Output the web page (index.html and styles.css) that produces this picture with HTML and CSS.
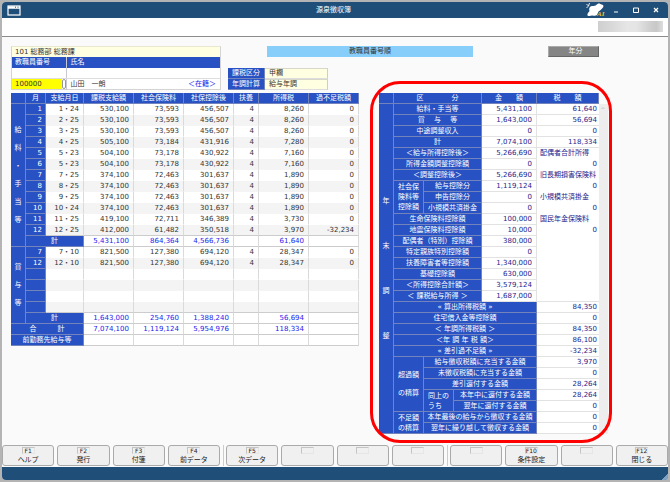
FILE: index.html
```html
<!DOCTYPE html>
<html lang="ja">
<head>
    <meta charset="UTF-8">
    <meta name="viewport" content="width=device-width, initial-scale=1.0">
    <title>源泉徴収簿</title>
    <link rel="stylesheet" href="styles.css">
</head>
<body>
    <div class="window">
        <header class="titlebar">
            <svg class="window-icon" viewBox="0 0 14 11" aria-hidden="true">
                <rect x="1" y="1" width="12" height="9" fill="none" stroke="#fff" stroke-width="1.2"/>
                <path d="M1 2.500h12" stroke="#fff" stroke-width="2.500"/>
                <path d="M8 2.200h1M10.500 2.200h1" stroke="#1f4e79" stroke-width="1"/>
            </svg>
            <h1>源泉徴収簿</h1>
            <div class="window-controls">
                <svg class="logo" viewBox="0 0 20 14" role="img" aria-label="AI">
                    <path d="M0.500 1l2 2-2 2M3.500 0l-1 3" fill="none" stroke="#fff" stroke-width=".9"/>
                    <path d="M1.500 12.500c-.5-2 1-3 2-4.500C2.500 5 4 2.500 7 3c2 .2 3-.8 4.500-2 1.500-1.200 3 0 4 .5 2 .2 2.500 2 1.200 3.200C15.500 6 15 7 12.500 8.500L11 12c-2 1.500-3.500.3-5 .5s-2.500 1-4.500 0z" fill="#fff"/>
                    <text x="11" y="13" class="logo-text">AI</text>
                </svg>
                <button type="button" aria-label="最小化">
                    <svg viewBox="0 0 8 8"><path d="M2 6h4" stroke="#fff" stroke-width="1.200"/></svg>
                </button>
                <button type="button" aria-label="最大化">
                    <svg viewBox="0 0 8 8"><path d="M1.500 2h5v4.500h-5z" fill="none" stroke="#fff"/></svg>
                </button>
                <button type="button" aria-label="閉じる">
                    <svg viewBox="0 0 8 8"><path d="M2 2l4 4M6 2l-4 4" stroke="#fff" stroke-width="1.300"/></svg>
                </button>
            </div>
        </header>

        <div class="toolbar"><span class="masked"></span></div>

        <main>
            <div class="summary">
                <div class="employee">
                    <div class="department">101 総務部 総務課</div>
                    <div class="employee-row employee-head">
                        <label for="employee-no">教職員番号</label>
                        <span>氏名</span>
                    </div>
                    <div class="employee-row employee-blank"><span></span><span></span></div>
                    <div class="employee-row">
                        <div class="number-field">
                            <input type="text" id="employee-no" value="100000">
                            <button type="button" aria-label="検索"></button>
                        </div>
                        <div class="name"><span>山田　一朗</span><span class="status">＜在籍＞</span></div>
                    </div>
                </div>
                <div class="sort-order">教職員番号順</div>
                <button type="button" class="year">年分</button>
                <table class="tax-type">
                    <tr><th scope="row">課税区分</th><td>甲欄</td></tr>
                    <tr><th scope="row">年調計算</th><td>給与年調</td></tr>
                </table>
            </div>

            <div class="ledgers">
                <table class="payroll">
                    <colgroup>
                        <col class="c-group"><col class="c-month"><col class="c-date">
                        <col class="c-amount"><col class="c-amount"><col class="c-amount">
                        <col class="c-family"><col class="c-amount"><col class="c-amount">
                    </colgroup>
                    <thead>
                        <tr><th></th><th>月</th><th>支給月日</th><th>課税支給額</th><th>社会保険料</th><th>社保控除後</th><th>扶養</th><th>所得税</th><th>過不足税額</th></tr>
                    </thead>
                    <tbody>
                        <tr><th rowspan="13" class="vertical">給<br>料<br>・<br>手<br>当<br>等</th><th class="month">1</th><td>1・24</td><td>530,100</td><td>73,593</td><td>456,507</td><td>4</td><td>8,260</td><td>0</td></tr>
                        <tr><th class="month">2</th><td>2・25</td><td>530,100</td><td>73,593</td><td>456,507</td><td>4</td><td>8,260</td><td>0</td></tr>
                        <tr><th class="month">3</th><td>3・25</td><td>530,100</td><td>73,593</td><td>456,507</td><td>4</td><td>8,260</td><td>0</td></tr>
                        <tr><th class="month">4</th><td>4・25</td><td>505,100</td><td>73,184</td><td>431,916</td><td>4</td><td>7,280</td><td>0</td></tr>
                        <tr><th class="month">5</th><td>5・23</td><td>504,100</td><td>73,178</td><td>430,922</td><td>4</td><td>7,160</td><td>0</td></tr>
                        <tr><th class="month">6</th><td>5・23</td><td>504,100</td><td>73,178</td><td>430,922</td><td>4</td><td>7,160</td><td>0</td></tr>
                        <tr><th class="month">7</th><td>7・25</td><td>374,100</td><td>72,463</td><td>301,637</td><td>4</td><td>1,890</td><td>0</td></tr>
                        <tr><th class="month">8</th><td>8・25</td><td>374,100</td><td>72,463</td><td>301,637</td><td>4</td><td>1,890</td><td>0</td></tr>
                        <tr><th class="month">9</th><td>9・25</td><td>374,100</td><td>72,463</td><td>301,637</td><td>4</td><td>1,890</td><td>0</td></tr>
                        <tr><th class="month">10</th><td>10・24</td><td>374,100</td><td>72,463</td><td>301,637</td><td>4</td><td>1,890</td><td>0</td></tr>
                        <tr><th class="month">11</th><td>11・25</td><td>419,100</td><td>72,711</td><td>346,389</td><td>4</td><td>3,730</td><td>0</td></tr>
                        <tr><th class="month">12</th><td>12・25</td><td>412,000</td><td>61,482</td><td>350,518</td><td>4</td><td>3,970</td><td>-32,234</td></tr>
                        <tr class="total"><th colspan="2">計</th><td>5,431,100</td><td>864,364</td><td>4,566,736</td><td></td><td>61,640</td><td></td></tr>
                    </tbody>
                    <tbody>
                        <tr><th rowspan="7" class="vertical">賞<br>与<br>等</th><th class="month">7</th><td>7・10</td><td>821,500</td><td>127,380</td><td>694,120</td><td>4</td><td>28,347</td><td>0</td></tr>
                        <tr><th class="month">12</th><td>12・10</td><td>821,500</td><td>127,380</td><td>694,120</td><td>4</td><td>28,347</td><td>0</td></tr>
                        <tr><th class="month"></th><td></td><td></td><td></td><td></td><td></td><td></td><td></td></tr>
                        <tr><th class="month"></th><td></td><td></td><td></td><td></td><td></td><td></td><td></td></tr>
                        <tr><th class="month"></th><td></td><td></td><td></td><td></td><td></td><td></td><td></td></tr>
                        <tr><th class="month"></th><td></td><td></td><td></td><td></td><td></td><td></td><td></td></tr>
                        <tr class="total"><th colspan="2">計</th><td>1,643,000</td><td>254,760</td><td>1,388,240</td><td></td><td>56,694</td><td></td></tr>
                    </tbody>
                    <tfoot>
                        <tr class="total"><th colspan="3">合　　　計</th><td>7,074,100</td><td>1,119,124</td><td>5,954,976</td><td></td><td>118,334</td><td></td></tr>
                        <tr class="total"><th colspan="3">前勤務先給与等</th><td></td><td></td><td></td><td></td><td></td><td></td></tr>
                    </tfoot>
                </table>

                <section class="highlight">
                    <table class="adjustment">
                        <colgroup>
                            <col class="a-group"><col class="a-label"><col class="a-label"><col class="a-rest">
                            <col class="a-amount"><col class="a-tax">
                        </colgroup>
                        <thead>
                            <tr><th></th><th colspan="3">区　　　　分</th><th>金　　額</th><th>税　　額</th></tr>
                        </thead>
                        <tbody>
                            <tr><th rowspan="30" class="vertical wide">年<br>末<br>調<br>整</th><th colspan="3">給料・手当等</th><td>5,431,100</td><td>61,640</td></tr>
                            <tr><th colspan="3">賞　 与　 等</th><td>1,643,000</td><td>56,694</td></tr>
                            <tr><th colspan="3">中途調整収入</th><td>0</td><td>0</td></tr>
                            <tr><th colspan="3">計</th><td>7,074,100</td><td>118,334</td></tr>
                            <tr><th colspan="3">＜給与所得控除後＞</th><td>5,266,690</td><td class="note">配偶者合計所得</td></tr>
                            <tr><th colspan="3">所得金額調整控除額</th><td>0</td><td class="plain">0</td></tr>
                            <tr><th colspan="3">＜調整控除後＞</th><td>5,266,690</td><td class="note">旧長期損害保険料</td></tr>
                            <tr><th rowspan="3" class="stacked">社会保<br>険料等<br>控除額</th><th colspan="2">給与控除分</th><td>1,119,124</td><td class="plain">0</td></tr>
                            <tr><th colspan="2">申告控除分</th><td>0</td><td class="note">小規模共済掛金</td></tr>
                            <tr><th colspan="2">小規模共済掛金</th><td>0</td><td class="plain">0</td></tr>
                            <tr><th colspan="3">生命保険料控除額</th><td>100,000</td><td class="note">国民年金保険料</td></tr>
                            <tr><th colspan="3">地震保険料控除額</th><td>10,000</td><td class="plain">0</td></tr>
                            <tr><th colspan="3">配偶者（特別）控除額</th><td>380,000</td><td class="plain"></td></tr>
                            <tr><th colspan="3">特定親族特別控除額</th><td>0</td><td class="plain"></td></tr>
                            <tr><th colspan="3">扶養障害者等控除額</th><td>1,340,000</td><td class="plain"></td></tr>
                            <tr><th colspan="3">基礎控除額</th><td>630,000</td><td class="plain"></td></tr>
                            <tr><th colspan="3">＜所得控除合計額＞</th><td>3,579,124</td><td class="plain"></td></tr>
                            <tr><th colspan="3">＜ 課税給与所得 ＞</th><td>1,687,000</td><td></td></tr>
                            <tr><th colspan="4">« 算出所得税額 »</th><td>84,350</td></tr>
                            <tr><th colspan="4">住宅借入金等控除額</th><td>0</td></tr>
                            <tr><th colspan="4">＜ 年調所得税額 ＞</th><td>84,350</td></tr>
                            <tr><th colspan="4">＜年 調 年 税 額＞</th><td>86,100</td></tr>
                            <tr><th colspan="4">« 差引過不足額 »</th><td>-32,234</td></tr>
                            <tr><th rowspan="5" class="vertical">超過額<br>の精算</th><th colspan="3">給与徴収税額に充当する金額</th><td>3,970</td></tr>
                            <tr><th colspan="3">未徴収税額に充当する金額</th><td>0</td></tr>
                            <tr><th colspan="3">差引還付する金額</th><td>28,264</td></tr>
                            <tr><th rowspan="2" class="stacked start">同上の<br>うち</th><th colspan="2">本年中に還付する金額</th><td>28,264</td></tr>
                            <tr><th colspan="2">翌年に還付する金額</th><td>0</td></tr>
                            <tr><th rowspan="2" class="stacked">不足額<br>の精算</th><th colspan="3">本年最後の給与から徴収する金額</th><td>0</td></tr>
                            <tr><th colspan="3">翌年に繰り越して徴収する金額</th><td>0</td></tr>
                        </tbody>
                    </table>
                    <div class="scroll-track">
                        <svg viewBox="0 0 8 8" aria-hidden="true"><path d="M2.500 5L4 3.500 5.500 5" fill="none" stroke="#bbb" stroke-width=".8"/></svg>
                    </div>
                </section>
            </div>
        </main>

        <nav class="function-keys">
            <div class="key-group">
                <button type="button"><kbd>F1</kbd>ヘルプ</button>
                <button type="button"><kbd>F2</kbd>発行</button>
                <button type="button"><kbd>F3</kbd>付箋</button>
                <button type="button"><kbd>F4</kbd>前データ</button>
            </div>
            <div class="key-group">
                <button type="button"><kbd>F5</kbd>次データ</button>
                <button type="button" aria-label="F6"><kbd></kbd></button>
                <button type="button" aria-label="F7"><kbd></kbd></button>
                <button type="button" aria-label="F8"><kbd></kbd></button>
            </div>
            <div class="key-group">
                <button type="button" aria-label="F9"><kbd></kbd></button>
                <button type="button"><kbd>F10</kbd>条件設定</button>
                <button type="button" aria-label="F11"><kbd></kbd></button>
                <button type="button"><kbd>F12</kbd>閉じる</button>
            </div>
        </nav>
        <footer class="statusbar"></footer>
    </div>
</body>
</html>
```

FILE: styles.css
```css
* {
    margin: 0;
    padding: 0;
    box-sizing: border-box;
}

body {
    min-height: 100vh;
    padding: 2px;
    display: flex;
    background-color: #b4b4b4;
    color: #333;
    font-family: "DejaVu Sans", "Noto Sans CJK JP", sans-serif;
    font-size: 7px;
    line-height: 10px;
}

button,
input,
kbd {
    font: inherit;
    color: inherit;
}

.window {
    flex: 1;
    min-width: 0;
    display: flex;
    flex-direction: column;
    background-color: #fafafa;
    border-radius: 4px;
    overflow: hidden;
}

/* Title bar */
.titlebar {
    display: grid;
    grid-template-columns: 1fr auto 1fr;
    align-items: center;
    height: 16px;
    padding: 0 8px 0 5px;
    background-color: #1f4e79;
    color: #fff;
}

.titlebar h1 {
    font-size: 7px;
    font-weight: 400;
}

.window-icon {
    width: 14px;
    height: 11px;
}

.window-controls {
    display: flex;
    justify-content: flex-end;
    align-items: center;
    gap: 12px;
}

.window-controls button {
    width: 8px;
    height: 8px;
    border: none;
    background: none;
}

.window-controls button svg {
    display: block;
}

.logo {
    width: 20px;
    height: 14px;
    margin-right: -6px;
}

.logo-text {
    fill: #f0c030;
    font: italic bold 7px "Liberation Serif", serif;
}

.toolbar {
    display: flex;
    justify-content: flex-end;
    height: 19px;
    padding: 3px 5px;
    background-color: #fff;
    border-bottom: 1px solid #8c8c8c;
}

.masked {
    width: 65px;
    height: 11px;
    background: linear-gradient(90deg, #cfcfcf, #d8d8d8 20%, #e6e6e6 45%, #e4e4e4 60%, #cfcfcf 80%, #c8c8c8 90%, #ddd);
}

main {
    flex: 1;
    padding: 9px 0 2px 9px;
}

/* Employee and tax type */
.summary {
    display: grid;
    grid-template-columns:
        minmax(0, 210fr) minmax(0, 7fr) minmax(0, 39fr) minmax(0, 61fr)
        minmax(0, 145fr) minmax(0, 75fr) minmax(0, 51fr) minmax(0, 69fr);
    grid-template-rows: 11px 33px;
}

.employee {
    grid-column: 1;
    grid-row: 1 / 3;
    background-color: #fff;
    border: 1px solid #d4d4d4;
    border-top-color: #e8e8d0;
}

.department {
    height: 10px;
    padding-left: 3px;
    background-color: #ffffe1;
}

.employee-row {
    display: grid;
    grid-template-columns: 56fr 154fr;
    height: 11px;
}

.employee-head {
    background-color: #2852c3;
    color: #fff;
}

.employee-head > * {
    padding-left: 3px;
}

.employee-row > :first-child {
    border-right: 1px solid #c8c8d4;
}

.employee-blank {
    border-bottom: 1px solid #ddd;
}

.number-field {
    display: flex;
    min-width: 0;
}

.number-field input {
    flex: 1;
    min-width: 0;
    height: 10px;
    padding-left: 3px;
    border: none;
    background-color: #ff0;
}

.number-field button {
    width: 4px;
    height: 10px;
    border: 1px solid #999;
    border-radius: 2px;
    background-color: #fff;
}

.name {
    display: flex;
    justify-content: space-between;
    padding: 0 4px 0 3px;
}

.status {
    color: #22e;
}

.sort-order {
    grid-column: 4 / 6;
    grid-row: 1;
    background-color: #87cefa;
    text-align: center;
}

.year {
    grid-column: 7;
    grid-row: 1;
    padding-left: 4px;
    border: 1px solid #666;
    border-top-color: #aaa;
    border-left-color: #aaa;
    background-color: #858585;
    color: #fff;
    line-height: 9px;
}

.tax-type {
    grid-column: 3 / 5;
    grid-row: 2;
    align-self: end;
    width: 100%;
}

.tax-type th {
    width: 37%;
}

.tax-type td {
    padding-left: 4px;
    background-color: #ffffe1;
    border-top: 1px solid #d8d8c8;
    border-right: 1px solid #d0d0c0;
    text-align: left;
    line-height: 9px;
}

/* Tables */
.ledgers {
    display: grid;
    grid-template-columns: minmax(0, 348fr) minmax(0, 11fr) minmax(0, 242fr) minmax(0, 56fr);
    align-items: start;
}

table {
    table-layout: fixed;
    border-collapse: separate;
    border-spacing: 0;
}

tr {
    height: 11px;
}

th {
    background-color: #2852c3;
    border-right: 1px solid #7384bc;
    border-bottom: 1px solid #7384bc;
    color: #fff;
    font-weight: 400;
    text-align: center;
    white-space: nowrap;
}

td {
    background-color: #fff;
    border-bottom: 1px solid #ddd;
    text-align: right;
    white-space: nowrap;
}

.vertical {
    line-height: 18px;
}

.vertical.wide {
    line-height: 45px;
}

.stacked {
    line-height: 10px;
}

.stacked.start {
    padding-left: 4px;
    text-align: left;
}

.payroll {
    width: 100%;
    margin-top: 3px;
}

.payroll td {
    padding-right: 4px;
    border-right: 1px solid #dadada;
    border-bottom-color: #fff;
}

.payroll tbody tr:nth-child(even) td {
    background-color: #f4f4f4;
    border-bottom-color: #f4f4f4;
}

.payroll .month {
    padding-right: 3px;
    text-align: right;
}

.payroll .total td,
.payroll tbody .total td {
    background-color: #fff;
    border-bottom-color: #ccc;
    color: #22e;
}

.payroll tbody tr:nth-last-child(2) td {
    border-bottom-color: #ccc;
}

.c-group { width: 15px; }
.c-month { width: 20px; }
.c-date { width: 38px; }
.c-family { width: 25px; }

/* Year-end adjustment */
.highlight {
    position: relative;
    grid-column: 3;
    display: flex;
    margin-top: -9px;
    padding: 12px 4px 9px 9px;
}

.highlight::after {
    content: "";
    position: absolute;
    inset: 0;
    border: 3px solid #f00;
    border-radius: 30px;
    pointer-events: none;
}

.adjustment {
    flex: 1;
    min-width: 0;
}

.adjustment td {
    padding-right: 2px;
    border-bottom-color: #e2e2e2;
    color: #1c1c8c;
}

.adjustment td:nth-last-child(2) {
    padding-right: 4px;
    border-right: 1px solid #e2e2e2;
}

.adjustment .note,
.adjustment .plain {
    border-bottom-color: #fff;
}

.adjustment .note {
    padding-left: 3px;
    text-align: left;
}

.a-group { width: 15px; }
.a-label { width: 30px; }
.a-rest { width: 28px; }
.a-amount { width: 55px; }

.scroll-track {
    width: 9px;
    margin-top: 11px;
    background-color: #ededed;
}

.scroll-track svg {
    display: block;
    width: 8px;
    height: 8px;
}

/* Function keys */
.function-keys {
    display: flex;
    gap: 3px;
    padding-bottom: 1px;
}

.key-group {
    flex: 1;
    display: flex;
    gap: 3px;
}

.key-group + .key-group {
    padding-left: 2px;
    border-left: 1px solid #ccc;
}

.key-group button {
    flex: 1;
    min-width: 0;
    height: 21px;
    display: flex;
    flex-direction: column;
    align-items: center;
    border: 1px solid #aaa;
    border-radius: 3px;
    background-color: #f0f0f0;
    color: #222;
    line-height: 10px;
}

kbd {
    min-width: 13px;
    height: 7px;
    margin: 1px 0;
    border: 1px solid #e6e6e6;
    border-top-color: #c4c4c4;
    border-left-color: #c4c4c4;
    font-size: 6px;
    line-height: 6px;
    text-align: center;
}

.statusbar {
    height: 13px;
    background: linear-gradient(135deg, transparent 50%, #7fa3c4 50%) right bottom / 6px 6px no-repeat #1f4e79;
}
```
